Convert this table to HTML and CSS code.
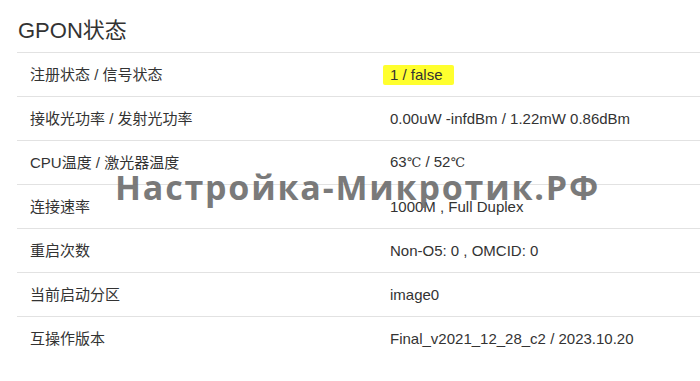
FILE: index.html
```html
<!DOCTYPE html>
<html lang="zh-CN">
<head>
<meta charset="utf-8">
<title>GPON状态</title>
<link rel="stylesheet" href="styles.css">
</head>
<body>
<div class="panel">
  <h2 class="panel-title">GPON状态</h2>
  <table class="status-table">
    <tbody>
      <tr><td class="label">注册状态 / 信号状态</td><td class="value"><span class="mark">1 / false</span></td></tr>
      <tr><td class="label">接收光功率 / 发射光功率</td><td class="value">0.00uW -infdBm / 1.22mW 0.86dBm</td></tr>
      <tr><td class="label">CPU温度 / 激光器温度</td><td class="value">63<span class="unit">℃</span> / 52<span class="unit">℃</span></td></tr>
      <tr><td class="label">连接速率</td><td class="value">1000M , Full Duplex</td></tr>
      <tr><td class="label">重启次数</td><td class="value">Non-O5: 0 , OMCID: 0</td></tr>
      <tr><td class="label">当前启动分区</td><td class="value">image0</td></tr>
      <tr><td class="label">互操作版本</td><td class="value">Final_v2021_12_28_c2 / 2023.10.20</td></tr>
    </tbody>
  </table>
</div>
<div class="watermark">Настройка-Микротик.РФ</div>
</body>
</html>
```
FILE: styles.css
```css
html, body {
  margin: 0;
  padding: 0;
  background: #fff;
}

body {
  font-family: "Liberation Sans", "Noto Sans CJK SC", sans-serif;
  color: #333;
  overflow: hidden;
}

.panel {
  padding-left: 17px;
}

.panel-title {
  margin: 0;
  height: 42px;
  padding: 10px 0 0 1px;
  font-size: 22px;
  line-height: 42px;
  font-weight: normal;
  color: #333;
}

.status-table {
  width: 100%;
  border-collapse: collapse;
  font-size: 15px;
}

.status-table td {
  height: 43px;
  padding: 0 0 0 13px;
  border-top: 1px solid #e2e2e2;
  line-height: 20px;
  vertical-align: middle;
}

.status-table .label {
  width: 347px;
}

.mark {
  display: inline-block;
  margin-left: -7px;
  padding: 0 11px 0 7px;
  line-height: 20px;
  background: #ffff2e;
  border-radius: 2px;
}

.unit {
  font-family: "DejaVu Serif", "Liberation Serif", serif;
  font-size: 13px;
}

/* site watermark laid over the table */
.watermark {
  position: absolute;
  left: 115px;
  top: 163px;
  font-family: "Open Sans", sans-serif;
  font-weight: 700;
  font-size: 34px;
  letter-spacing: 1.8px;
  line-height: 48px;
  color: #6f6f6f;
  opacity: 0.92;
  white-space: nowrap;
}
```
